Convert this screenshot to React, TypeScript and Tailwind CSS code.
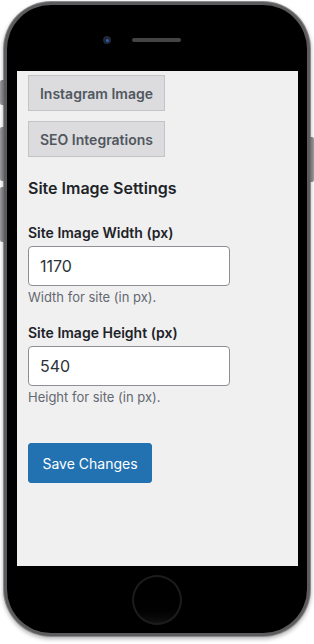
export default function App() {
  return (
    <div className="relative w-[314px] h-[644px] bg-white overflow-hidden" style={{ fontFamily: 'Inter, "Noto Sans", sans-serif' }}>
      {/* side buttons */}
      <div className="absolute left-0 top-[80px] w-[4px] h-[25px] rounded-l-[2px] bg-gradient-to-r from-[#9a9a9c] to-[#6a6a6c]" />
      <div className="absolute left-0 top-[127px] w-[4px] h-[54px] rounded-l-[2px] bg-gradient-to-r from-[#9a9a9c] to-[#6a6a6c]" />
      <div className="absolute left-0 top-[187px] w-[4px] h-[55px] rounded-l-[2px] bg-gradient-to-r from-[#9a9a9c] to-[#6a6a6c]" />
      <div className="absolute right-0 top-[137px] w-[4px] h-[45px] rounded-r-[2px] bg-gradient-to-l from-[#9a9a9c] to-[#6a6a6c]" />

      <div className="mx-[3px] mt-[1px] h-[636px] rounded-[48px] bg-[#8a8a8c] p-[1px] shadow-[0_2px_4px_rgba(0,0,0,0.3)]">
        <div className="h-full rounded-[47px] bg-[#5c5c5e] p-[3px]">
          <div className="h-full rounded-[44px] bg-black flex flex-col">
            <div className="relative h-[66px]">
              <div className="absolute left-[96px] top-[31px] w-[8px] h-[8px] rounded-full bg-[#202837] flex items-center justify-center">
                <div className="w-[3px] h-[3px] rounded-full bg-[#2f5fb0]" />
              </div>
              <div className="absolute left-[125px] top-[33px] w-[49px] h-[4px] rounded-full bg-[#444446]" />
            </div>
            <div className="ml-[10px] mr-[9px] h-[495px] bg-[#f0f0f1] px-[11px] pt-[4px] text-[#1d2327]">
              <div className="flex flex-col gap-[10px] items-start">
                <button className="h-[36px] w-[137px] bg-[#dcdcde] border border-[#c3c4c7] text-[#50575e] text-[14px] font-semibold">Instagram Image</button>
                <button className="h-[36px] w-[137px] bg-[#dcdcde] border border-[#c3c4c7] text-[#50575e] text-[14px] font-semibold">SEO Integrations</button>
              </div>
              <h2 className="mt-[20px] text-[16px] font-semibold leading-[22px]">Site Image Settings</h2>

              <div className="mt-[24px]">
                <label className="block text-[14px] font-semibold leading-[20px]">Site Image Width (px)</label>
                <input defaultValue="1170" className="mt-[3px] w-[202px] h-[40px] bg-white border border-[#8c8f94] rounded-[4px] px-[11px] text-[16px] text-[#2c3338] outline-none" />
                <p className="mt-[1px] text-[13px] leading-[20px] text-[#646970]">Width for site (in px).</p>
              </div>

              <div className="mt-[16px]">
                <label className="block text-[14px] font-semibold leading-[20px]">Site Image Height (px)</label>
                <input defaultValue="540" className="mt-[3px] w-[202px] h-[40px] bg-white border border-[#8c8f94] rounded-[4px] px-[11px] text-[16px] text-[#2c3338] outline-none" />
                <p className="mt-[1px] text-[13px] leading-[20px] text-[#646970]">Height for site (in px).</p>
              </div>

              <button className="mt-[36px] h-[40px] w-[124px] rounded-[3px] bg-[#2271b1] text-white text-[14px] border border-[#2271b1]">Save Changes</button>
            </div>
            <div className="flex-1 flex items-center justify-center">
              <div className="w-[50px] h-[50px] rounded-full bg-[#1c1c1e] p-[2px]">
                <div className="w-full h-full rounded-full bg-gradient-to-b from-black from-50% to-[#111]" />
              </div>
            </div>
          </div>
        </div>
      </div>
    </div>
  );
}
